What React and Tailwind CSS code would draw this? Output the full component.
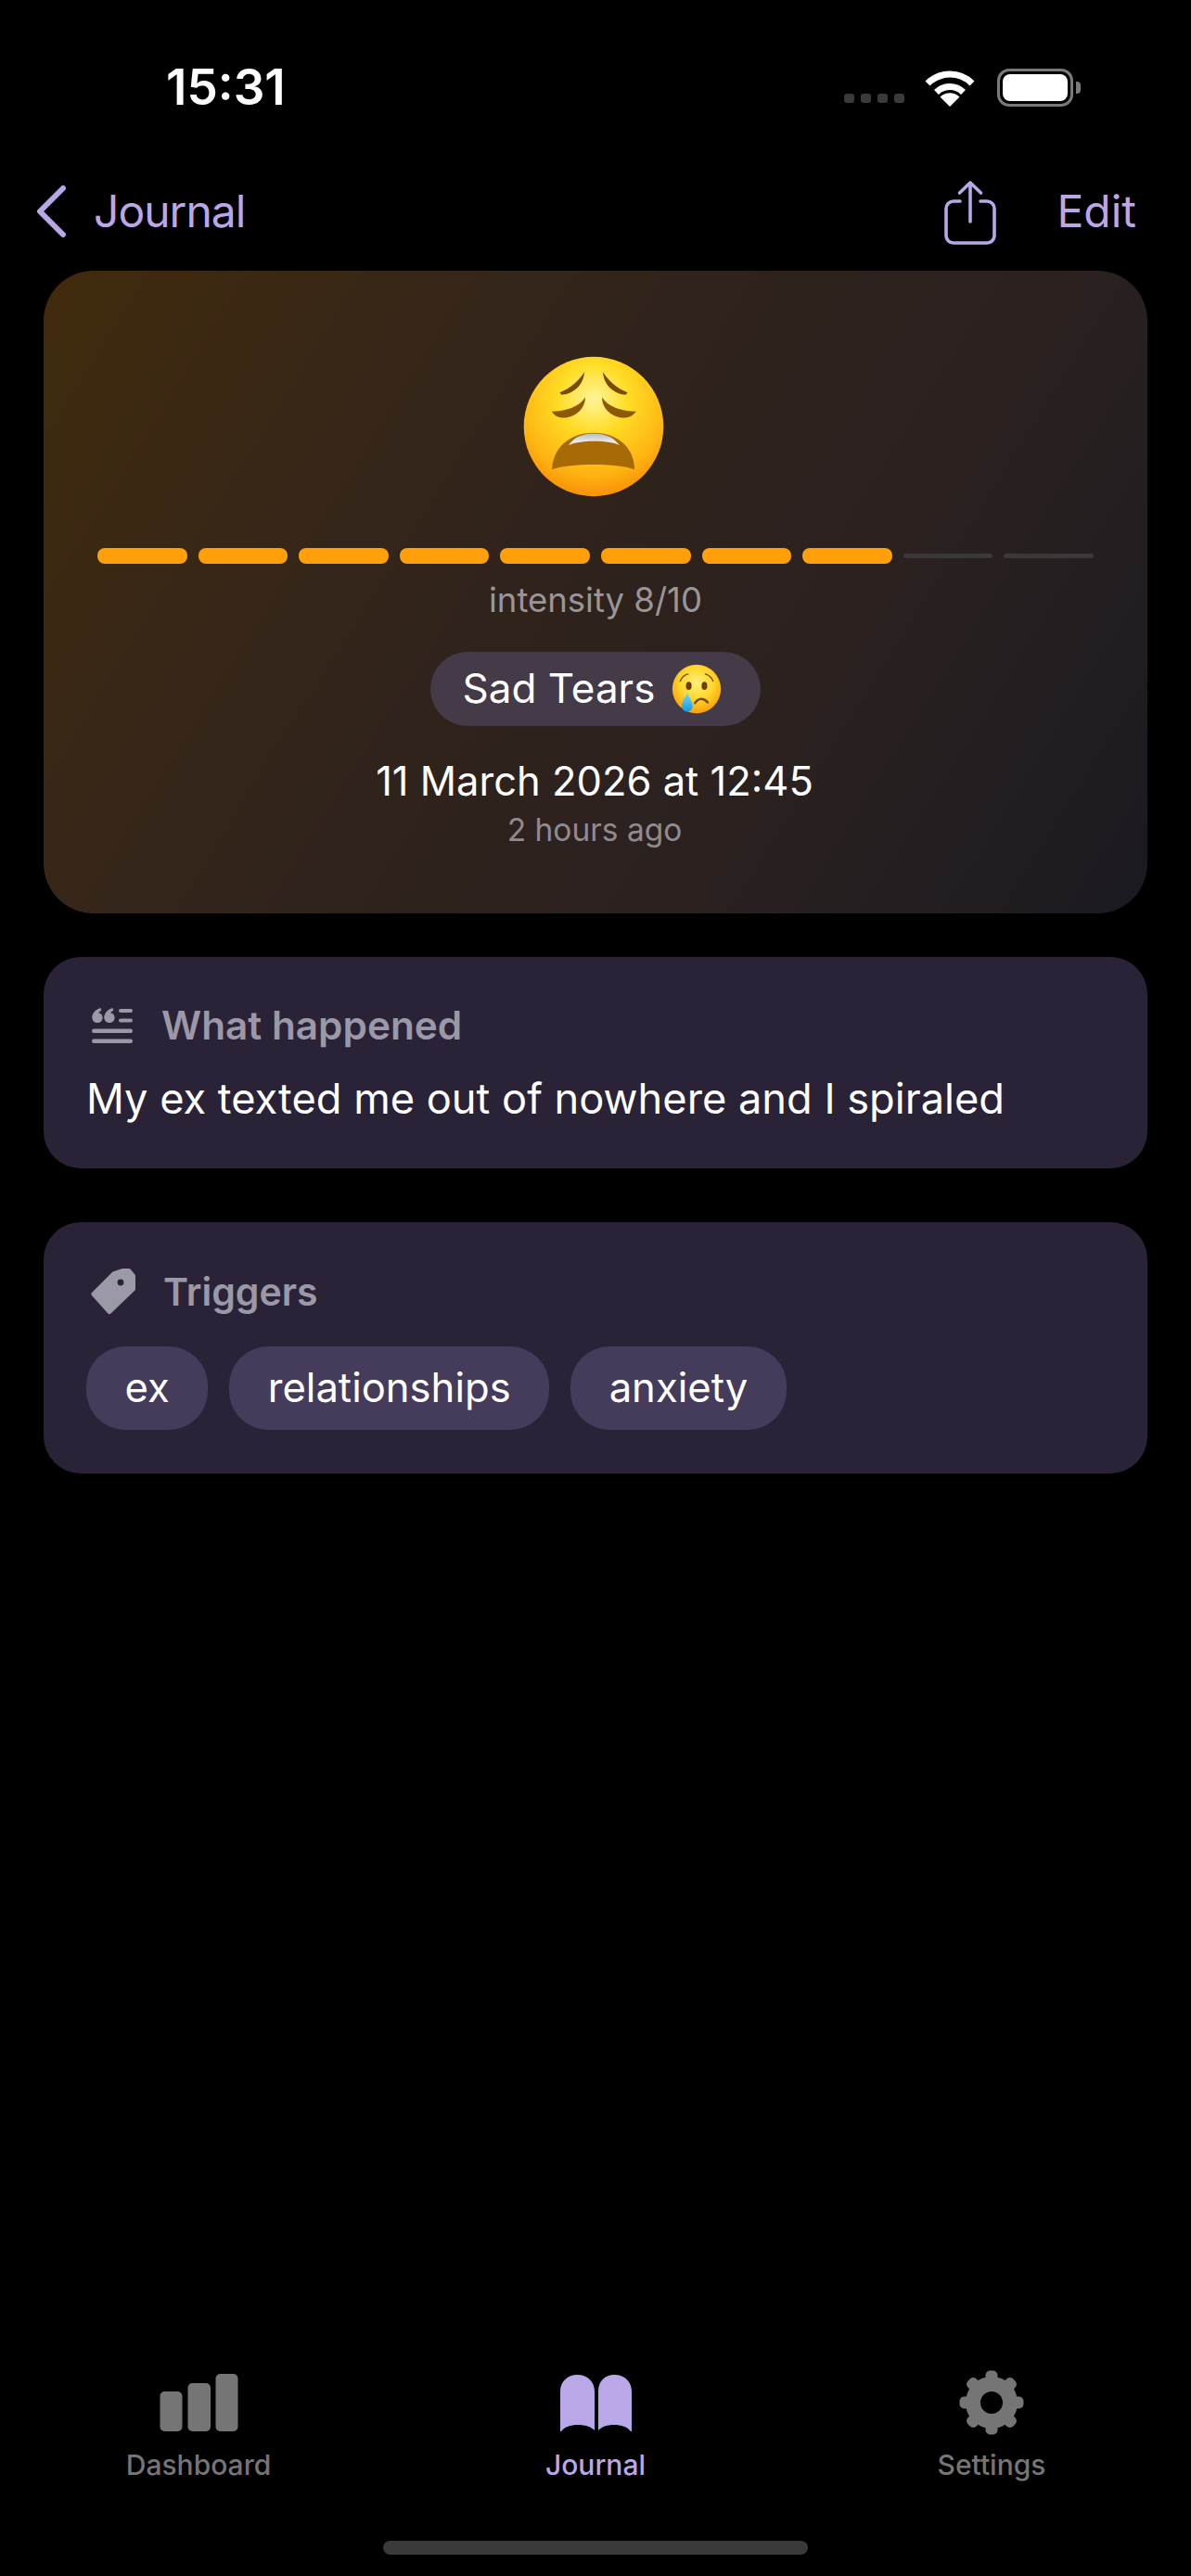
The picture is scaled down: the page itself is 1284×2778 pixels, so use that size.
const segments = [1, 1, 1, 1, 1, 1, 1, 1, 0, 0];
const triggers = ["ex", "relationships", "anxiety"];
const gearTeeth = [0, 45, 90, 135, 180, 225, 270, 315];

function Wifi() {
  return (
    <svg width="56" height="41" viewBox="0 0 56 41" fill="none">
      <path d="M28 41 L17.5 30.5 A15 15 0 0 1 38.5 30.5 Z" fill="#fff" />
      <path d="M13.5 25.5 A20.5 20.5 0 0 1 42.5 25.5" stroke="#fff" strokeWidth="7" />
      <path d="M4 16 A34 34 0 0 1 52 16" stroke="#fff" strokeWidth="7" />
    </svg>
  );
}

function Battery() {
  return (
    <div className="flex items-center">
      <div className="w-[82px] h-[41px] rounded-[13px] border-[3.5px] border-[#7a7a7a] p-[3px]">
        <div className="w-full h-full rounded-[8px] bg-white" />
      </div>
      <div className="ml-[3px] w-[5px] h-[13px] rounded-r-[4px] bg-[#7a7a7a]" />
    </div>
  );
}

function StatusBar() {
  return (
    <div className="h-[60px] mt-[64px] flex items-center justify-between pl-[179px] pr-[119px]">
      <span className="text-[53px] leading-none font-semibold text-white">15:31</span>
      <div className="flex items-center">
        <div className="flex gap-[7px] self-end mb-[4px] mr-[21px]">
          <div className="w-[11px] h-[10px] rounded-[3px] bg-[#3a3a3a]" />
          <div className="w-[11px] h-[10px] rounded-[3px] bg-[#3a3a3a]" />
          <div className="w-[11px] h-[10px] rounded-[3px] bg-[#3a3a3a]" />
          <div className="w-[11px] h-[10px] rounded-[3px] bg-[#3a3a3a]" />
        </div>
        <div className="mr-[23px]">
          <Wifi />
        </div>
        <Battery />
      </div>
    </div>
  );
}

function NavBar() {
  return (
    <div className="h-[80px] mt-[64px] mb-[24px] flex items-center pl-[38px] pr-[59px] text-[#b9a7e8]">
      <svg width="36" height="58" viewBox="0 0 36 58" fill="none" stroke="#b9a7e8" strokeWidth="6" strokeLinecap="round" strokeLinejoin="round">
        <path d="M30 4 L5 29 L30 54" />
      </svg>
      <span className="ml-[27px] text-[48px] leading-none tracking-[-1px]">Journal</span>
      <svg className="ml-auto mt-[4px]" width="60" height="72" viewBox="0 0 60 72" fill="none" stroke="#b9a7e8" strokeWidth="3.6" strokeLinecap="round" strokeLinejoin="round">
        <path d="M19 23 H12 a8 8 0 0 0 -8 8 V60 a8 8 0 0 0 8 8 H48 a8 8 0 0 0 8 -8 V31 a8 8 0 0 0 -8 -8 H41" />
        <path d="M30 45 V3 M18.5 14 L30 3 L41.5 14" />
      </svg>
      <span className="ml-[63px] text-[48px] leading-none">Edit</span>
    </div>
  );
}

function WearyFace() {
  return (
    <svg className="-translate-x-[2px]" width="154" height="154" viewBox="103 71 454 454">
      <defs>
        <radialGradient id="wearyFace" cx="50%" cy="30%" r="72%">
          <stop offset="0%" stopColor="#fff59a" />
          <stop offset="35%" stopColor="#ffdc24" />
          <stop offset="75%" stopColor="#ffb413" />
          <stop offset="100%" stopColor="#f78d04" />
        </radialGradient>
        <linearGradient id="wearyTeeth" x1="0" y1="0" x2="0" y2="1">
          <stop offset="0%" stopColor="#b9bcc2" />
          <stop offset="100%" stopColor="#ffffff" />
        </linearGradient>
      </defs>
      <circle cx="330" cy="298" r="222" fill="url(#wearyFace)" />
      <path d="M222 190 C260 175 285 150 300 125 C300 160 270 195 228 197 Z" fill="#7b4a02" />
      <path d="M438 190 C400 175 375 150 360 125 C360 160 390 195 432 197 Z" fill="#7b4a02" />
      <path d="M197 250 C240 250 285 235 303 205 C305 240 270 270 235 270 C215 270 205 262 197 250 Z" fill="#8d5803" />
      <path d="M465 250 C420 250 375 235 357 205 C355 240 390 270 425 270 C445 270 455 262 465 250 Z" fill="#8d5803" />
      <path d="M198 434 C200 370 250 318 330 318 C410 318 460 370 460 434 C400 414 260 414 198 434 Z" fill="#a66a06" />
      <path d="M250 358 C270 328 300 320 330 320 C360 320 392 328 412 358 C385 340 280 340 250 358 Z" fill="url(#wearyTeeth)" />
    </svg>
  );
}

function CryingFace() {
  return (
    <svg width="54" height="54" viewBox="0 0 64 64">
      <defs>
        <radialGradient id="cryFace" cx="50%" cy="38%" r="62%">
          <stop offset="0%" stopColor="#fff07a" />
          <stop offset="55%" stopColor="#ffd62b" />
          <stop offset="100%" stopColor="#fb9f0c" />
        </radialGradient>
        <linearGradient id="cryTear" x1="0" y1="0" x2="0" y2="1">
          <stop offset="0%" stopColor="#7fd8fb" />
          <stop offset="100%" stopColor="#0f9be8" />
        </linearGradient>
      </defs>
      <circle cx="32" cy="32" r="31" fill="url(#cryFace)" />
      <path d="M11 22 C13 17 17 14 21 13" fill="none" stroke="#7b4a02" strokeWidth="1.6" strokeLinecap="round" />
      <path d="M53 22 C51 17 47 14 43 13" fill="none" stroke="#7b4a02" strokeWidth="1.6" strokeLinecap="round" />
      <ellipse cx="22" cy="28" rx="3.6" ry="5.2" fill="#6b4002" />
      <ellipse cx="42" cy="28" rx="3.6" ry="5.2" fill="#6b4002" />
      <path d="M30 50 C34 43 41 43 46 49" fill="none" stroke="#7b4a02" strokeWidth="3" strokeLinecap="round" />
      <path d="M20 36 C21.5 42 27 47 27 53 C27 58 24 61 20 61 C16 61 13 58 13 53 C13 47 18.5 42 20 36 Z" fill="url(#cryTear)" />
    </svg>
  );
}

function HeroCard() {
  return (
    <div className="h-[693px] rounded-[54px] bg-[linear-gradient(122deg,#422b0c_0%,#35261a_30%,#2e221c_50%,#2a2120_70%,#1b1a21_100%)] pt-[91px] flex flex-col items-center">
      <WearyFace />
      <div className="mt-[54px] h-[17px] w-[1074px] flex items-center gap-[12px]">
        {segments.map((on, i) => (
          <div key={i} className={on ? "flex-1 h-[17px] rounded-[8px] bg-[#ff9f0a]" : "flex-1 h-[5px] rounded-[3px] bg-[#3b3839]"} />
        ))}
      </div>
      <div className="mt-[19px] h-[40px] flex items-center text-[36.5px] leading-none text-[#9a9599]">intensity 8/10</div>
      <div className="mt-[36px] h-[80px] pl-[35px] pr-[42px] rounded-[40px] bg-[#453a47] flex items-center gap-[18px] text-[44px] leading-none text-white">
        <span className="-mt-[2px]">Sad Tears</span>
        <CryingFace />
      </div>
      <div className="mt-[35px] h-[50px] flex items-center text-[43.5px] leading-none text-white -translate-x-[1px]">11 March 2026 at 12:45</div>
      <div className="mt-[8px] h-[40px] flex items-center text-[33.5px] leading-none text-[#8f8b8f] -translate-x-[1px]">2 hours ago</div>
    </div>
  );
}

function QuoteIcon() {
  return (
    <svg width="44" height="38" viewBox="0 0 44 38" fill="#9b98a8">
      <circle cx="6" cy="10.5" r="5.6" />
      <path d="M0.4 10.5 C0.4 6 3.5 1.5 9.5 0 L10.5 2.6 C7.5 4 6.5 6 6.5 9 Z" />
      <circle cx="19" cy="10.5" r="5.6" />
      <path d="M13.4 10.5 C13.4 6 16.5 1.5 22.5 0 L23.5 2.6 C20.5 4 19.5 6 19.5 9 Z" />
      <rect x="29" y="1" width="15" height="4" rx="2" />
      <rect x="29" y="11.5" width="15" height="4" rx="2" />
      <rect x="0" y="22.5" width="44" height="4.4" rx="2.2" />
      <rect x="0" y="33.5" width="44" height="4.4" rx="2.2" />
    </svg>
  );
}

function TagIcon() {
  return (
    <svg width="50" height="50" viewBox="0 0 50 50">
      <path
        d="M3 27.5 L25 5.5 L34 2.5 L41 2.5 L45.5 8 L45.5 22 L20 46.5 Z"
        fill="#9b98a8"
        stroke="#9b98a8"
        strokeWidth="5"
        strokeLinejoin="round"
      />
      <circle cx="32" cy="15" r="3.4" fill="#2a2337" />
    </svg>
  );
}

function InfoCards() {
  return (
    <>
      <div className="mt-[47px] h-[228px] rounded-[40px] bg-[#2a2337] pl-[46px] pt-[52px]">
        <div className="h-[44px] pl-[6px] flex items-center">
          <QuoteIcon />
          <span className="ml-[31px] text-[42.3px] leading-none font-semibold text-[#9b98a8]">What happened</span>
        </div>
        <div className="mt-[29px] h-[56px] flex items-center text-[45.2px] leading-none text-white">
          My ex texted me out of nowhere and I spiraled
        </div>
      </div>
      <div className="mt-[58px] h-[271px] rounded-[40px] bg-[#2a2337] pl-[46px] pt-[50px]">
        <div className="h-[50px] pl-[5px] flex items-center">
          <TagIcon />
          <span className="ml-[28px] text-[41px] leading-none font-semibold text-[#9b98a8]">Triggers</span>
        </div>
        <div className="mt-[34px] flex gap-[23px]">
          {triggers.map((t) => (
            <div key={t} className="h-[90px] px-[41.5px] rounded-[42px] bg-[#453b5a] flex items-center text-[43.6px] leading-none text-white">
              {t}
            </div>
          ))}
        </div>
      </div>
    </>
  );
}

function TabBar() {
  return (
    <div className="mt-auto grid grid-cols-3 text-[30px] leading-none font-medium">
      <div className="flex flex-col items-center text-[#757575]">
        <svg className="h-[70px]" width="85" height="70" viewBox="0 0 85 70" fill="#757575">
          <rect x="0.5" y="23" width="24" height="43" rx="5" />
          <rect x="30.5" y="14" width="24.5" height="52" rx="5" />
          <rect x="60.5" y="4" width="24" height="62" rx="5" />
        </svg>
        <span className="mt-[14px] h-[36px] flex items-center">Dashboard</span>
      </div>
      <div className="flex flex-col items-center text-[#b9a7e8]">
        <svg className="h-[70px]" width="77" height="70" viewBox="0 0 77 70" fill="#b9a7e8">
          <path d="M0 66 V23 C0 12 8 5 18.5 5 C29 5 37 12 37 23 V65 C33 61 27 59 19 59 C11 59 5 61 1 66 Z" />
          <path d="M77 66 V23 C77 12 69 5 58.5 5 C48 5 41 12 41 23 V65 C45 61 50 59 58 59 C66 59 72 61 76 66 Z" />
        </svg>
        <span className="mt-[14px] h-[36px] flex items-center">Journal</span>
      </div>
      <div className="flex flex-col items-center text-[#757575] -translate-x-[1px]">
        <svg className="h-[70px]" width="72" height="70" viewBox="0 0 72 70">
          <circle cx="36" cy="35" r="20" fill="none" stroke="#757575" strokeWidth="16" />
          {gearTeeth.map((a) => (
            <rect key={a} x="29.5" y="0.5" width="13" height="16" rx="5" fill="#757575" transform={`rotate(${a} 36 35)`} />
          ))}
        </svg>
        <span className="mt-[14px] h-[36px] flex items-center">Settings</span>
      </div>
    </div>
  );
}

export default function App() {
  return (
    <div className="w-[1284px] h-[2778px] bg-black flex flex-col overflow-hidden font-['Inter',sans-serif]">
      <StatusBar />
      <NavBar />
      <div className="mx-[47px]">
        <HeroCard />
        <InfoCards />
      </div>
      <TabBar />
      <div className="mt-[64px] mb-[23px] mx-auto w-[458px] h-[15px] rounded-full bg-[#3a3a3a]" />
    </div>
  );
}
